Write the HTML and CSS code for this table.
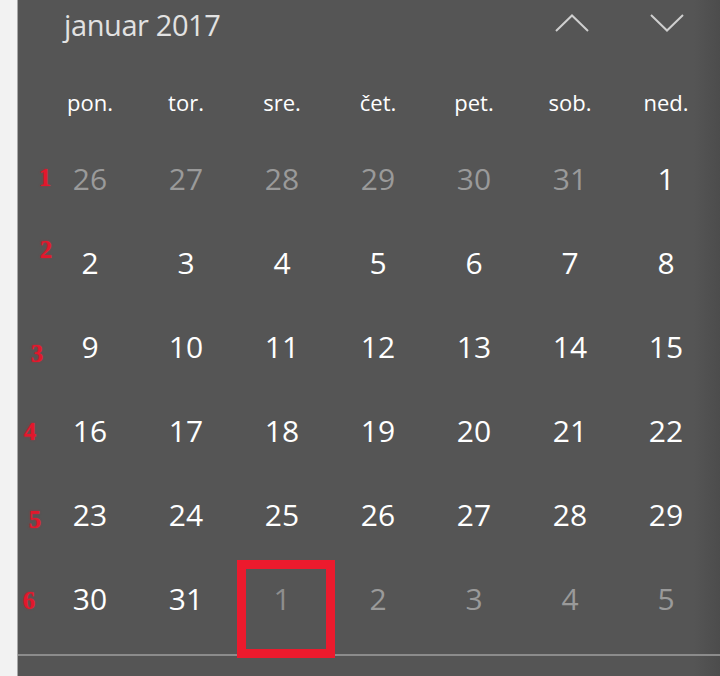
FILE: index.html
```html
<!DOCTYPE html>
<html lang="sr">
<head>
<meta charset="utf-8">
<title>Kalendar</title>
<link rel="stylesheet" href="styles.css">
</head>
<body>
<div class="cal">
  <div class="head">
    <span class="title">januar 2017</span>
    <div class="nav">
      <button class="navbtn" aria-label="Prethodni">
        <svg width="34" height="18" viewBox="0 0 34 18"><polyline points="1,17 17,1.5 33,17" fill="none" stroke="#cfcfcf" stroke-width="2"/></svg>
      </button>
      <button class="navbtn" aria-label="Sledeći">
        <svg width="34" height="18" viewBox="0 0 34 18"><polyline points="1,1 17,16.5 33,1" fill="none" stroke="#cfcfcf" stroke-width="2"/></svg>
      </button>
    </div>
  </div>
  <div class="weekdays">
    <span>pon.</span><span>tor.</span><span>sre.</span><span>čet.</span><span>pet.</span><span>sob.</span><span>ned.</span>
  </div>
  <div class="week">
    <span class="wk wk1">1</span>
    <span class="day out">26</span><span class="day out">27</span><span class="day out">28</span><span class="day out">29</span><span class="day out">30</span><span class="day out">31</span><span class="day">1</span>
  </div>
  <div class="week">
    <span class="wk wk2">2</span>
    <span class="day">2</span><span class="day">3</span><span class="day">4</span><span class="day">5</span><span class="day">6</span><span class="day">7</span><span class="day">8</span>
  </div>
  <div class="week">
    <span class="wk wk3">3</span>
    <span class="day">9</span><span class="day">10</span><span class="day">11</span><span class="day">12</span><span class="day">13</span><span class="day">14</span><span class="day">15</span>
  </div>
  <div class="week">
    <span class="wk wk4">4</span>
    <span class="day">16</span><span class="day">17</span><span class="day">18</span><span class="day">19</span><span class="day">20</span><span class="day">21</span><span class="day">22</span>
  </div>
  <div class="week">
    <span class="wk wk5">5</span>
    <span class="day">23</span><span class="day">24</span><span class="day">25</span><span class="day">26</span><span class="day">27</span><span class="day">28</span><span class="day">29</span>
  </div>
  <div class="week">
    <span class="wk wk6">6</span>
    <span class="day">30</span><span class="day">31</span><span class="day out marked">1<span class="mark"></span></span><span class="day out">2</span><span class="day out">3</span><span class="day out">4</span><span class="day out">5</span>
  </div>
  <div class="foot"></div>
</div>
</body>
</html>
```

FILE: styles.css
```css
html, body {
  margin: 0;
  padding: 0;
}
body {
  background: #f2f2f2;
  width: 720px;
  height: 676px;
  overflow: hidden;
  font-family: "Open Sans", "Noto Sans", sans-serif;
}
.cal {
  margin-left: 17px;
  height: 676px;
  border-left: 1px solid #a8a8a8;
  background: linear-gradient(to right, #555555 0, #555555 calc(100% - 26px), #4c4c4c 100%);
  color: #ffffff;
  box-sizing: border-box;
}
.head {
  height: 50px;
  display: flex;
  align-items: flex-start;
  justify-content: space-between;
}
.title {
  font-size: 29px;
  line-height: 50px;
  letter-spacing: -0.4px;
  color: #e2e2e2;
  padding-left: 46px;
}
.nav {
  display: flex;
  gap: 61px;
  padding-top: 14px;
  padding-right: 36px;
}
.navbtn {
  border: 0;
  padding: 0;
  margin: 0;
  background: none;
  width: 34px;
  height: 18px;
  display: block;
}
.navbtn svg {
  display: block;
}
.weekdays {
  height: 87px;
  box-sizing: border-box;
  padding: 0 0 20px 24px;
  display: grid;
  grid-template-columns: repeat(7, 96px);
  align-items: end;
  font-size: 22px;
  line-height: 30px;
  text-align: center;
}
.week {
  position: relative;
  height: 84px;
  padding-left: 24px;
  display: grid;
  grid-template-columns: repeat(7, 96px);
  font-size: 30px;
  line-height: 84px;
  text-align: center;
}
.day {
  position: relative;
}
.out {
  color: #9a9a9a;
}
.marked {
  color: #8e8e8e;
}
.mark {
  position: absolute;
  left: 3px;
  top: 3px;
  width: 98px;
  height: 98px;
  box-sizing: border-box;
  border: 9px solid #ec1a2d;
  z-index: 2;
}
.wk {
  position: absolute;
  width: 16px;
  font-family: "Liberation Serif", serif;
  font-weight: bold;
  font-size: 25px;
  line-height: 24px;
  text-align: center;
  color: #e3172c;
  text-shadow: 0 0 2px rgba(227, 23, 44, 0.7);
}
.wk1 { left: 19px; top: 29px; }
.wk2 { left: 20px; top: 17px; }
.wk3 { left: 11px; top: 37px; }
.wk4 { left: 4px; top: 31px; }
.wk5 { left: 9px; top: 35px; }
.wk6 { left: 3px; top: 32px; }
.foot {
  margin-top: 13px;
  border-top: 2px solid #8c8c8c;
}
```
